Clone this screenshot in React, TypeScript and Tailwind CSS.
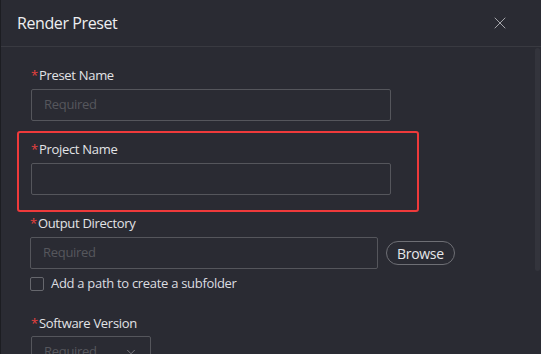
import {X, ChevronDown} from "lucide-react"

function Label({text}: {text: string}) {
  return (
    <div className="flex h-[20px] items-center text-[13px] leading-[20px] tracking-[-0.3px] text-[#e2e3e6]">
      <span className="mr-[1px] text-[#e8413f]">*</span>
      {text}
    </div>
  )
}

function TextInput({placeholder, width = "w-[360px]"}: {placeholder?: string; width?: string}) {
  return (
    <div
      className={`flex h-[32px] ${width} items-center rounded-[2px] border border-[#55565c] px-[12px] text-[13px] tracking-[-0.3px] text-[#56575d]`}
    >
      {placeholder}
    </div>
  )
}

export default function App() {
  return (
    <div
      className="flex h-[354px] w-[541px] flex-col overflow-hidden border-l border-[#1c1d22] bg-[#2a2b33]"
      style={{fontFamily: '"Open Sans", "Noto Sans", sans-serif'}}
    >
      <div className="flex h-[47px] shrink-0 items-center justify-between border-b border-[#393a41] pl-[16px] pr-[31px]">
        <span className="text-[16px] tracking-[-0.4px] text-[#eeeff1]">Render Preset</span>
        <X size={20} strokeWidth={1.2} className="text-[#a4a5aa]" />
      </div>

      <div className="flex min-h-0 flex-1">
        <div className="flex-1 pl-[16px] pt-[18px]">
          <div className="pl-[14px]">
            <Label text="Preset Name" />
            <div className="mt-[4px]">
              <TextInput placeholder="Required" />
            </div>
          </div>

          <div className="mt-[10px] w-[402px] rounded-[3px] border-2 border-[#ee3a3b] pb-[15px] pl-[12px] pt-[6px]">
            <Label text="Project Name" />
            <div className="mt-[4px]">
              <TextInput />
            </div>
          </div>

          <div className="mt-[1px] pl-[13px]">
            <Label text="Output Directory" />
            <div className="mt-[4px] flex items-center gap-[8px]">
              <TextInput placeholder="Required" width="w-[348px]" />
              <button className="flex h-[24px] items-center rounded-full border border-[#6e6f75] px-[10px] text-[14px] tracking-[-0.3px] text-[#e6e7ea]">
                Browse
              </button>
            </div>
            <div className="mt-[5px] flex h-[20px] items-center gap-[7px] text-[13px] tracking-[-0.3px] text-[#dcdde0]">
              <div className="h-[14px] w-[14px] rounded-[2px] border border-[#66676d]" />
              Add a path to create a subfolder
            </div>
          </div>

          <div className="mt-[19px] pl-[14px]">
            <Label text="Software Version" />
            <div className="mt-[3px] flex h-[32px] w-[120px] items-center justify-between rounded-[2px] border border-[#55565c] pl-[12px] pr-[12px] text-[13px] tracking-[-0.3px] text-[#56575d]">
              Required
              <ChevronDown size={14} strokeWidth={1.4} className="text-[#8a8b90]" />
            </div>
          </div>
        </div>

        <div className="mr-[1px] mt-[1px] h-[223px] w-[5px] rounded-full bg-[#33343c]" />
      </div>
    </div>
  )
}
